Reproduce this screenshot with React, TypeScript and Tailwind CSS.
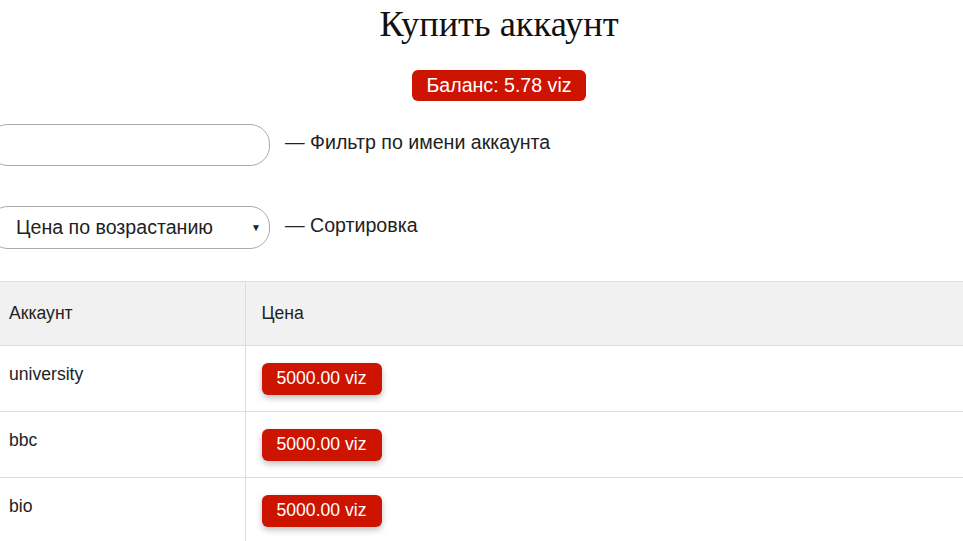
import React from "react";

const rows = [
  { name: "university", price: "5000.00" },
  { name: "bbc", price: "5000.00" },
  { name: "bio", price: "5000.00" },
];

function Badge({ children }: { children: React.ReactNode }) {
  return (
    <span className="inline-flex items-center h-[32px] px-[15px] rounded-[6px] bg-[#cc1400] text-white text-[17.6px] leading-none shadow-[0_3px_6px_rgba(0,0,0,0.25)]">
      {children}
    </span>
  );
}

export default function App() {
  return (
    <div className="min-h-screen bg-white font-['Liberation_Sans',Arial,sans-serif] text-[17.6px] text-[#222] overflow-hidden">
      <div className="pl-[35px]">
        <h1 className="pt-[4px] text-center font-['Liberation_Serif','Times_New_Roman',serif] text-[36.4px] leading-[40px] font-normal text-[#111]">
          Купить аккаунт
        </h1>

        <div className="mt-[26px] flex justify-center">
          <span className="inline-flex items-center h-[31px] px-[14px] rounded-[6px] bg-[#cc1400] text-white text-[19.6px] leading-none">
            Баланс: 5.78 viz
          </span>
        </div>
      </div>

      {/* Фильтры */}
      <div className="-ml-[12px] mt-[23px] flex flex-col gap-[40px] text-[19.6px]">
        <div className="flex items-center gap-[15px]">
          <input
            type="text"
            className="w-[282px] h-[42px] rounded-[20px] border border-[#aaa] px-[16px] outline-none bg-white"
          />
          <span className="-mt-[4px]">— Фильтр по имени аккаунта</span>
        </div>
        <div className="flex items-center gap-[15px]">
          <div className="relative w-[282px] h-[43px]">
            <select className="appearance-none w-full h-full rounded-[20px] border border-[#aaa] pl-[27px] pr-[24px] bg-white text-[#222] outline-none">
              <option>Цена по возрастанию</option>
              <option>Цена по убыванию</option>
            </select>
            <span className="pointer-events-none absolute right-[9px] top-[14px] text-[10px] text-[#222]">
              ▼
            </span>
          </div>
          <span className="-mt-[4px]">— Сортировка</span>
        </div>
      </div>

      {/* Таблица */}
      <table className="mt-[32px] w-full border-collapse">
        <thead>
          <tr className="bg-[#f1f1f1] h-[64px] border-y border-[#ddd]">
            <th className="w-[245px] text-left font-normal pl-[9px] border-r border-[#ddd]">
              Аккаунт
            </th>
            <th className="text-left font-normal pl-[16px]">Цена</th>
          </tr>
        </thead>
        <tbody>
          {rows.map((r) => (
            <tr key={r.name} className="h-[66px] border-b border-[#ddd]">
              <td className="align-top pl-[9px] pt-[16px] leading-[24px] border-r border-[#ddd]">
                {r.name}
              </td>
              <td className="align-middle pl-[16px]">
                <Badge>{r.price} viz</Badge>
              </td>
            </tr>
          ))}
        </tbody>
      </table>
    </div>
  );
}
